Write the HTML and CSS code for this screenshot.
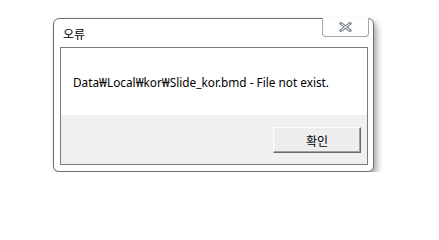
FILE: index.html
```html
<!DOCTYPE html>
<html lang="ko">
<head>
<meta charset="utf-8">
<link rel="stylesheet" href="styles.css">
</head>
<body>
<div class="page">
  <div class="window">
    <div class="titlebar"><span class="title">오류</span></div>
    <button class="close" aria-label="닫기">
      <svg width="13" height="10" viewBox="0 0 13 10">
        <path d="M2 1.5 L11 8.5 M11 1.5 L2 8.5" stroke="#7d838e" stroke-width="3" stroke-linecap="square" fill="none"/>
        <path d="M2 1.5 L11 8.5 M11 1.5 L2 8.5" stroke="#ffffff" stroke-width="1" fill="none"/>
      </svg>
    </button>
    <div class="panel">
      <div class="message">Data₩Local₩kor₩Slide_kor.bmd - File not exist.</div>
      <div class="actions"><button class="ok">확인</button></div>
    </div>
  </div>
</div>
</body>
</html>
```
FILE: styles.css
```css
html, body {
  margin: 0;
  padding: 0;
  background: #ffffff;
}
body {
  font-family: "Noto Sans", "Noto Sans CJK KR", sans-serif;
  font-size: 12px;
  color: #000;
}
.page {
  padding: 18px 0 0 53px;
}
.window {
  position: relative;
  box-sizing: border-box;
  width: 321px;
  height: 154px;
  border: 1px solid #6f6f6f;
  border-radius: 6px;
  background: #ffffff;
  padding: 0 5px 6px 6px;
  box-shadow: 3px 4px 6px rgba(0, 0, 0, 0.35);
  display: flex;
  flex-direction: column;
}
.titlebar {
  height: 28px;
  display: flex;
  align-items: center;
  padding-left: 3px;
}
.title {
  font-family: "Noto Sans CJK KR", sans-serif;
  font-size: 12px;
  line-height: 14px;
  margin-top: 2px;
}
.close {
  position: absolute;
  top: -1px;
  right: 4px;
  width: 47px;
  height: 19px;
  box-sizing: border-box;
  border: 1px solid #a7a7a7;
  border-top: none;
  border-radius: 0 0 4px 4px;
  background: #ffffff;
  padding: 0;
  display: flex;
  align-items: center;
  justify-content: center;
}
.panel {
  flex: 1;
  border: 1px solid #7a7a7a;
  display: flex;
  flex-direction: column;
}
.message {
  height: 67px;
  display: flex;
  align-items: center;
  padding-left: 12px;
  background: #ffffff;
  white-space: nowrap;
  font-size: 11.8px;
}
.actions {
  flex: 1;
  background: #f0f0f0;
  display: flex;
  justify-content: flex-end;
  align-items: flex-start;
  padding: 12px 6px 0 0;
}
.ok {
  box-sizing: border-box;
  width: 88px;
  height: 26px;
  background: #eeeeee;
  border: 1px solid;
  border-color: #ffffff #696969 #696969 #ffffff;
  box-shadow: inset -1px -1px 0 #a0a0a0;
  font-family: "Noto Sans CJK KR", sans-serif;
  font-size: 12px;
  color: #000;
  padding: 0;
}
```
